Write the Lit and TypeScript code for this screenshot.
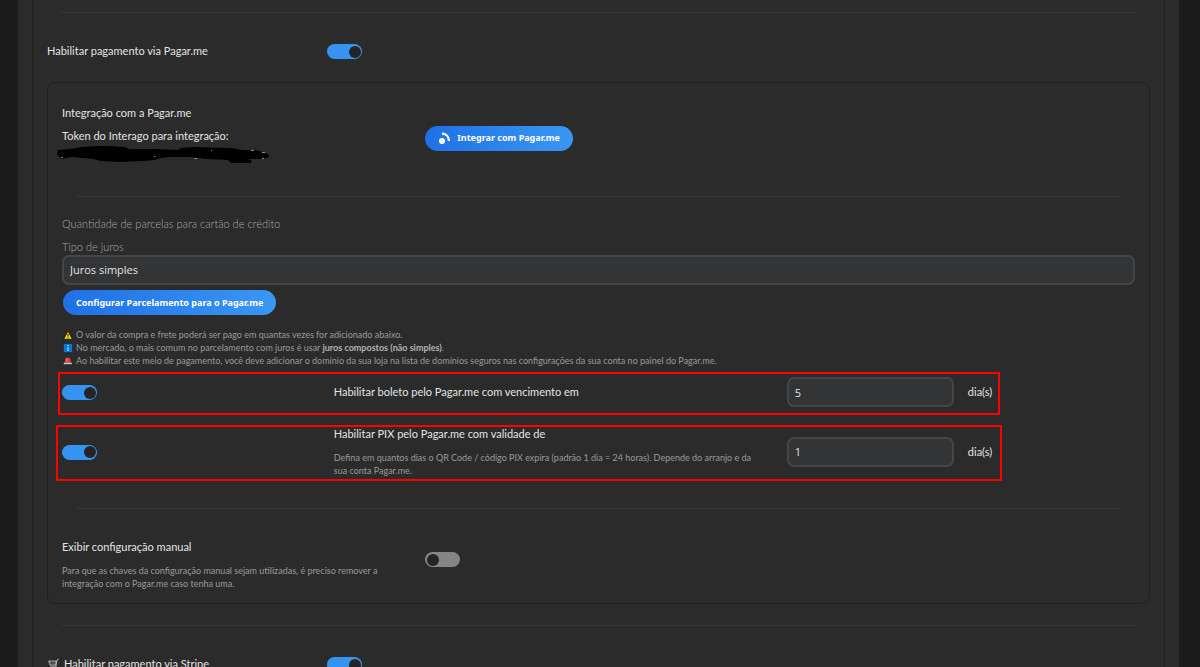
import { LitElement, html, css, svg } from "lit";
import { customElement, property } from "lit/decorators.js";

@customElement("toggle-switch")
class ToggleSwitch extends LitElement {
  @property({ type: Boolean }) on = false;
  @property() label = "";

  static styles = css`
    :host { display: block; padding-top: 1px; }
    .switch {
      appearance: none; display: flex; align-items: center; box-sizing: border-box;
      width: 35px; height: 15px; margin: 0; padding: 0 2px; border-radius: 8px;
      background: #858585; cursor: pointer;
    }
    .switch::before {
      content: ""; width: 12px; height: 12px; border-radius: 50%; background: #242424;
    }
    .switch:checked { background: #3694f1; justify-content: flex-end; padding: 0 1px; }
  `;

  render() {
    return html`<input class="switch" type="checkbox" role="switch" aria-label=${this.label} .checked=${this.on} />`;
  }
}

const integrateIcon = svg`
  <svg class="icon" viewBox="0 0 12 12" width="12" height="12" aria-hidden="true">
    <circle cx="4" cy="8.9" r="3" fill="#fff"/>
    <path d="M4 1.7C8 1.7 10.9 4.6 10.9 9" fill="none" stroke="#fff" stroke-width="2.3"/>
  </svg>`;

const warningIcon = svg`
  <svg class="mark" viewBox="0 0 10 10" width="10" height="10" aria-hidden="true">
    <path d="M5 1L9.4 9.3H.6z" fill="#f5d90a" stroke="#111" stroke-width=".8" stroke-linejoin="round"/>
    <path d="M5 3.8V6.6M5 7.4V8.4" stroke="#222" stroke-width="1"/>
  </svg>`;

const infoIcon = svg`
  <svg class="mark" viewBox="0 0 10 10" width="10" height="10" aria-hidden="true">
    <rect x=".4" y=".4" width="9.2" height="9.2" fill="#0a78d2" stroke="#0b2236" stroke-width=".6"/>
    <path d="M5 2V3.2M5 4.2V8" stroke="#cfe8ff" stroke-width="1.1"/>
  </svg>`;

const sirenIcon = svg`
  <svg class="mark" viewBox="0 0 10 10" width="10" height="10" aria-hidden="true">
    <path d="M2 6.6V4.2a2.8 2.8 0 0 1 5.6 0V6.6z" fill="#ec3a40"/>
    <path d="M3.4 5.3V4.2a1.4 1.4 0 0 1 1-1.3" stroke="#ff9a9a" stroke-width=".7" fill="none"/>
    <rect x=".8" y="6.6" width="8" height="1.6" fill="#c9c9c9"/>
  </svg>`;

const cartIcon = svg`
  <svg class="cart" viewBox="0 0 12 12" width="12" height="12" aria-hidden="true">
    <path d="M.6 3H8.2L7.6 7.2H2z" fill="#6d6d6d" stroke="#d0d0d0" stroke-width=".7"/>
    <path d="M1.4 5H8M3.6 3V7M5.8 3V7" stroke="#2b2b2b" stroke-width=".5"/>
    <path d="M10.6 1.3L9 2L7.8 9H2.2" fill="none" stroke="#d0d0d0" stroke-width=".8"/>
    <path d="M9.3 1.8L11 1" stroke="#e0632f" stroke-width="1"/>
    <circle cx="3" cy="10.4" r=".9" fill="#c0c0c0"/><circle cx="7.2" cy="10.4" r=".9" fill="#c0c0c0"/>
  </svg>`;

const redaction = svg`
  <svg class="redaction" viewBox="0 0 214 18" width="214" height="18" aria-hidden="true">
    <path d="M1 4L14 3L24 1L40 0H52L68 1L72 3L98 3L121 4L124 2L136 1L174 2L186 4L198 4L206 6L212 9L212 11L206 13L191 13L195 15L193 17L174 17L171 14L150 13L132 11L113 11L104 12L98 14L86 15L62 16L44 15L36 13L15 11L4 13L2 10L0 9z" fill="#000"/>
    <path d="M97 10.5H98.5M137 12.5H140M194 4.5H197M205 6.5H208M205 12.5H207M4 11.5H6M154 4.5H155" stroke="#8d877f" stroke-width="1"/>
  </svg>`;

@customElement("app-root")
class AppRoot extends LitElement {
  static styles = css`
    :host {
      display: block; height: 100vh; overflow: hidden; box-sizing: border-box; padding: 0 21px 0 18px;
      background: #1c1c1c; color: #e4e4e4;
      font: 11px/16px Lato, "Open Sans", sans-serif;
    }
    * { box-sizing: border-box; }
    p { margin: 0; }
    .frame { min-height: 100%; padding: 0 14px; background: #2b2b2b; }
    .column {
      min-height: 100vh; padding: 12px 14px 0;
      border: solid #212121; border-width: 0 1px;
    }
    .divider { height: 1px; margin: 0 14px; border: 0; background: #363636; }
    .grid { display: grid; grid-template-columns: repeat(12, minmax(0, 1fr)); column-gap: 14px; align-items: center; }
    .span2 { grid-column: span 2; }
    .span3 { grid-column: span 3; }
    .span4 { grid-column: span 4; }
    .span5 { grid-column: span 5; }
    .method { margin: 30px 0 23px; }
    .method.last { margin-bottom: 0; }
    .method toggle-switch, .manual toggle-switch { padding-left: 1px; }
    .named { display: flex; align-items: center; gap: 4px; padding-left: 1px; white-space: nowrap; }
    .panel { margin-bottom: 21px; padding: 22px 14px 13px; border: 1px solid #202020; border-radius: 8px; }
    .stack { display: grid; gap: 7px; }
    .integration { padding-bottom: 25px; }
    .token { height: 43px; }
    .redaction { display: block; margin: 2px 0 0 -5px; }
    .pill {
      display: inline-flex; align-items: center; gap: 7px; height: 25px; margin: 0 1px; padding: 0 13px;
      border: 0; border-radius: 13px; color: #fff; cursor: pointer; white-space: nowrap;
      background: linear-gradient(90deg, #1f70e5, #3a97f3);
      font: bold 9px/16px "Noto Sans", "Open Sans", sans-serif;
    }
    .muted { color: #a6a6a6; font-weight: 300; }
    .terms { padding-top: 19px; }
    .type { display: block; margin-top: 7px; }
    .field {
      display: block; width: 100%; height: 30px; padding: 0 6px; appearance: none;
      border: 2px solid #444546; border-radius: 7px; background: #323436; color: #e4e4e4;
      font: 11px/16px "Open Sans", "Noto Sans", sans-serif;
    }
    .field::-webkit-inner-spin-button { appearance: none; }
    .terms .pill { margin: 5px 1px 13px; }
    .note { color: #9a9a9a; font-size: 9px; line-height: 13px; }
    .notes { margin: 0 0 10px; padding: 0; list-style: none; }
    .notes li { display: flex; align-items: center; gap: 3px; margin-left: 1px; white-space: nowrap; }
    .notes b { color: #b4b4b4; }
    .mark { flex: none; }
    .marked { position: relative; }
    .marked::after {
      content: ""; position: absolute; border: 2px solid #f00; pointer-events: none;
      inset: -5px 12.6% -8px -4px;
    }
    .marked.wide::after { inset: -1px 12.4% -4px -6px; }
    .pix { margin: 19px 0 31px; }
    .pix .note { padding-right: 14px; }
    .pix .stack, .manual .stack { gap: 9px; }
    .manual { padding-top: 30px; align-items: start; }
    .manual toggle-switch { margin-top: 12px; }
  `;

  render() {
    return html`
      <div class="frame">
        <main class="column">
          <hr class="divider" />
          <section class="grid method">
            <span class="span3">Habilitar pagamento via Pagar.me</span>
            <toggle-switch class="span3" on label="Habilitar pagamento via Pagar.me"></toggle-switch>
          </section>

          <section class="panel">
            <div class="grid integration">
              <div class="span4 stack">
                <p>Integração com a Pagar.me</p>
                <div class="token">
                  <p>Token do Interago para integração:</p>
                  ${redaction}
                </div>
              </div>
              <div class="span4"><button class="pill" type="button">${integrateIcon}Integrar com Pagar.me</button></div>
            </div>
            <hr class="divider" />

            <div class="terms">
              <p class="muted">Quantidade de parcelas para cartão de crédito</p>
              <label class="muted type" for="interest">Tipo de juros</label>
              <select class="field" id="interest"><option>Juros simples</option></select>
              <button class="pill" type="button">Configurar Parcelamento para o Pagar.me</button>
            </div>
            <ul class="notes note">
              <li>${warningIcon}<span>O valor da compra e frete poderá ser pago em quantas vezes for adicionado abaixo.</span></li>
              <li>${infoIcon}<span>No mercado, o mais comum no parcelamento com juros é usar <b>juros compostos (não simples)</b>.</span></li>
              <li>${sirenIcon}<span>Ao habilitar este meio de pagamento, você deve adicionar o domínio da sua loja na lista de domínios seguros nas configurações da sua conta no painel do Pagar.me.</span></li>
            </ul>

            <div class="grid marked">
              <toggle-switch class="span3" on label="Habilitar boleto"></toggle-switch>
              <label class="span5" for="boleto">Habilitar boleto pelo Pagar.me com vencimento em</label>
              <input class="field span2" id="boleto" type="number" value="5" />
              <span class="span2">dia(s)</span>
            </div>

            <div class="grid marked wide pix">
              <toggle-switch class="span3" on label="Habilitar PIX"></toggle-switch>
              <div class="span5 stack">
                <label for="pix">Habilitar PIX pelo Pagar.me com validade de</label>
                <p class="note">Defina em quantos dias o QR Code / código PIX expira (padrão 1 dia = 24 horas). Depende do arranjo e da sua conta Pagar.me.</p>
              </div>
              <input class="field span2" id="pix" type="number" value="1" />
              <span class="span2">dia(s)</span>
            </div>
            <hr class="divider" />

            <div class="grid manual">
              <div class="span4 stack">
                <p>Exibir configuração manual</p>
                <p class="note">Para que as chaves da configuração manual sejam utilizadas, é preciso remover a integração com o Pagar.me caso tenha uma.</p>
              </div>
              <toggle-switch class="span4" label="Exibir configuração manual"></toggle-switch>
            </div>
          </section>

          <hr class="divider" />
          <section class="grid method last">
            <span class="span3 named">${cartIcon}<span>Habilitar pagamento via Stripe</span></span>
            <toggle-switch class="span3" on label="Habilitar pagamento via Stripe"></toggle-switch>
          </section>
        </main>
      </div>
    `;
  }
}
